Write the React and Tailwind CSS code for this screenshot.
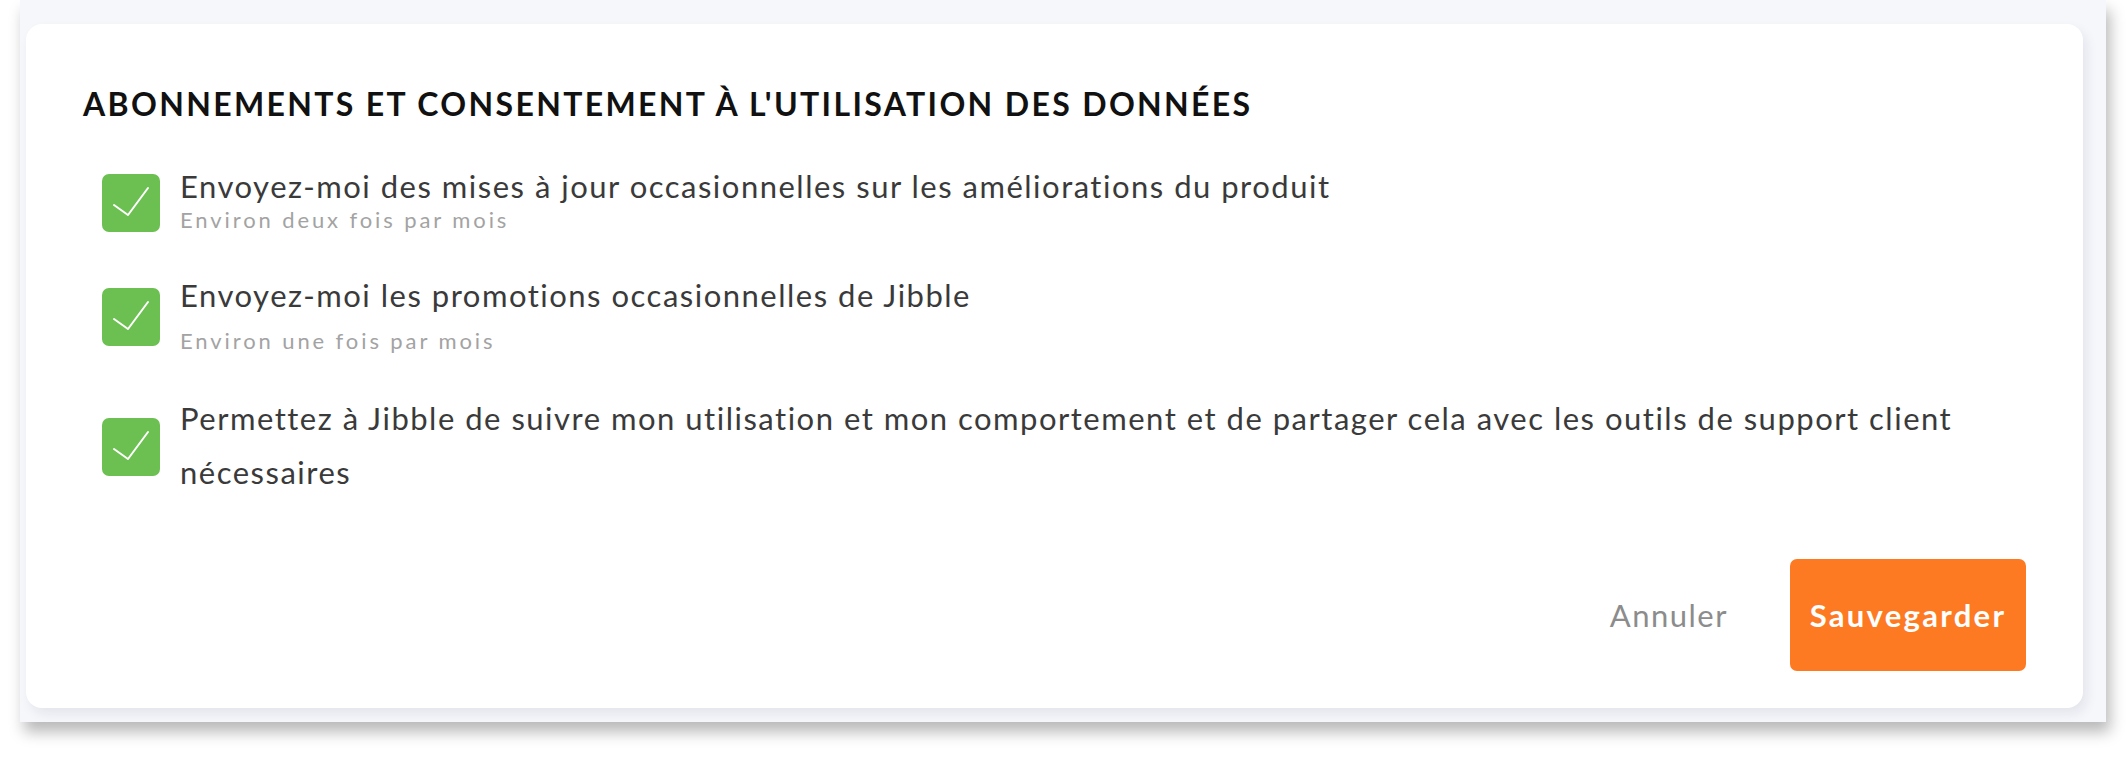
import React from "react";

function Check() {
  return (
    <div className="w-[58px] h-[58px] shrink-0 rounded-[7px] bg-[#6cc051] flex items-center justify-center">
      <svg width="58" height="58" viewBox="0 0 58 58" fill="none">
        <path d="M12 31 L26 41 L46 14" stroke="#ffffff" strokeWidth="2" strokeLinecap="round" strokeLinejoin="round" />
      </svg>
    </div>
  );
}

export default function App() {
  return (
    <div className="w-[2126px] h-[762px] bg-white overflow-hidden" style={{ fontFamily: "Lato, 'Noto Sans', sans-serif" }}>
      <div className="ml-[20px] w-[2086px] h-[722px] bg-[#f6f7fb] shadow-[4px_10px_14px_rgba(0,0,0,0.28)] pt-[24px] pl-[6px]">
        <div className="w-[2057px] h-[684px] bg-white rounded-[16px] shadow-[4px_6px_12px_rgba(20,30,60,0.08)] pl-[57px] pr-[57px] pt-[63.5px] flex flex-col">
          <h1 className="text-[32px] leading-[32px] font-bold tracking-[2.35px] text-[#111111] uppercase whitespace-nowrap">
            Abonnements et consentement à l'utilisation des données
          </h1>

          <div className="mt-[48.5px] pl-[19px] flex items-start gap-[20px]">
            <div className="mt-[6px]"><Check /></div>
            <div className="flex flex-col">
              <div className="text-[31px] leading-[36px] tracking-[1.5px] text-[#3a3a3a]">
                Envoyez-moi des mises à jour occasionnelles sur les améliorations du produit
              </div>
              <div className="mt-[2.5px] text-[22px] leading-[26px] tracking-[2.9px] text-[#a3a3a3]">
                Environ deux fois par mois
              </div>
            </div>
          </div>

          <div className="mt-[44.5px] pl-[19px] flex items-start gap-[20px]">
            <div className="mt-[11px]"><Check /></div>
            <div className="flex flex-col">
              <div className="text-[31px] leading-[36px] tracking-[1.5px] text-[#3a3a3a]">
                Envoyez-moi les promotions occasionnelles de Jibble
              </div>
              <div className="mt-[14.5px] text-[22px] leading-[26px] tracking-[2.9px] text-[#a3a3a3]">
                Environ une fois par mois
              </div>
            </div>
          </div>

          <div className="mt-[37.5px] pl-[19px] flex items-start gap-[20px]">
            <div className="mt-[27px]"><Check /></div>
            <div className="flex-1 min-w-0 text-[31px] leading-[54px] tracking-[1.5px] text-[#3a3a3a]">
              Permettez à Jibble de suivre mon utilisation et mon comportement et de partager cela avec les outils de support client nécessaires
            </div>
          </div>

          <div className="mt-[60px] flex items-center justify-end">
            <button className="mr-[62px] text-[31px] leading-[36px] tracking-[1.5px] text-[#8c8c8c]">Annuler</button>
            <button className="w-[236px] h-[112px] rounded-[7px] bg-[#fe7a22] text-white text-[31px] leading-[36px] tracking-[2.3px] font-bold">
              Sauvegarder
            </button>
          </div>
        </div>
      </div>
    </div>
  );
}
